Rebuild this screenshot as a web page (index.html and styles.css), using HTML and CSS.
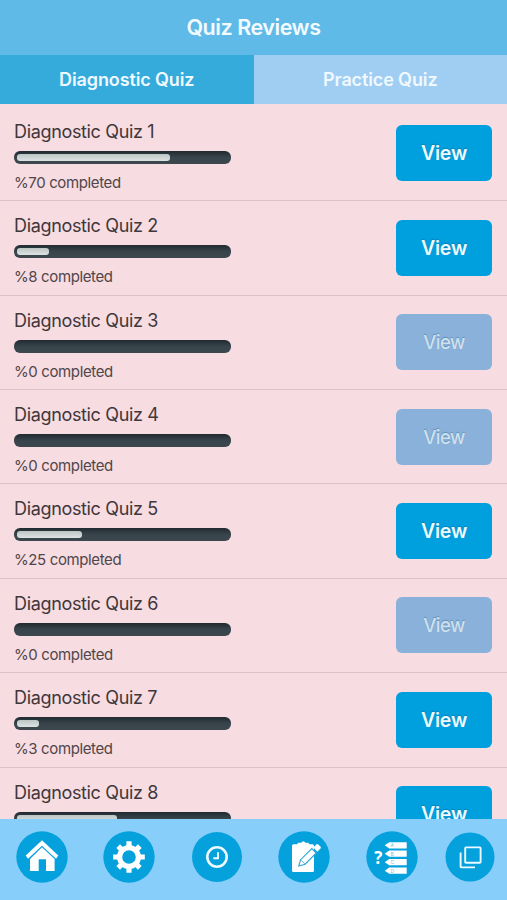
FILE: index.html
```html
<!DOCTYPE html>
<html lang="en">
<head>
    <meta charset="UTF-8">
    <meta name="viewport" content="width=device-width, initial-scale=1.0">
    <title>Quiz Reviews</title>
    <link rel="stylesheet" href="styles.css">
</head>
<body>
    <div class="app">
        <header class="header">Quiz Reviews</header>
        <nav class="tabs">
            <a class="tab active">Diagnostic Quiz</a>
            <a class="tab">Practice Quiz</a>
        </nav>

        <main class="quiz-list">
            <div class="quiz">
                <div class="info">
                    <div class="title">Diagnostic Quiz 1</div>
                    <div class="progress"><div class="fill" style="width: 72.5%"></div></div>
                    <div class="status">%70 completed</div>
                </div>
                <button class="view">View</button>
            </div>
            <div class="quiz">
                <div class="info">
                    <div class="title">Diagnostic Quiz 2</div>
                    <div class="progress"><div class="fill" style="width: 15.2%"></div></div>
                    <div class="status">%8 completed</div>
                </div>
                <button class="view">View</button>
            </div>
            <div class="quiz">
                <div class="info">
                    <div class="title">Diagnostic Quiz 3</div>
                    <div class="progress"></div>
                    <div class="status">%0 completed</div>
                </div>
                <button class="view" disabled>View</button>
            </div>
            <div class="quiz">
                <div class="info">
                    <div class="title">Diagnostic Quiz 4</div>
                    <div class="progress"></div>
                    <div class="status">%0 completed</div>
                </div>
                <button class="view" disabled>View</button>
            </div>
            <div class="quiz">
                <div class="info">
                    <div class="title">Diagnostic Quiz 5</div>
                    <div class="progress"><div class="fill" style="width: 31%"></div></div>
                    <div class="status">%25 completed</div>
                </div>
                <button class="view">View</button>
            </div>
            <div class="quiz">
                <div class="info">
                    <div class="title">Diagnostic Quiz 6</div>
                    <div class="progress"></div>
                    <div class="status">%0 completed</div>
                </div>
                <button class="view" disabled>View</button>
            </div>
            <div class="quiz">
                <div class="info">
                    <div class="title">Diagnostic Quiz 7</div>
                    <div class="progress"><div class="fill" style="width: 10.5%"></div></div>
                    <div class="status">%3 completed</div>
                </div>
                <button class="view">View</button>
            </div>
            <div class="quiz">
                <div class="info">
                    <div class="title">Diagnostic Quiz 8</div>
                    <div class="progress"><div class="fill" style="width: 47.5%"></div></div>
                </div>
                <button class="view">View</button>
            </div>
        </main>

        <footer class="toolbar">
            <svg class="icon" viewBox="0 0 52 52">
                <circle class="disc" cx="26" cy="26" r="25.7"/>
                <path class="solid" d="M26 9.2 42.3 24.6 40 27.8 26 14.8 12 27.8 9.7 24.6Z"/>
                <path class="solid" d="M26 16.3 38.6 28V40H30V28.2H22.7V40H14V28Z"/>
            </svg>
            <svg class="icon" viewBox="0 0 52 52">
                <circle class="disc" cx="26" cy="26" r="25.7"/>
                <circle class="ring" cx="26" cy="26" r="9.4"/>
                <g class="solid">
                    <path d="M23.4 15.5V10.2H28.6V15.5ZM23.4 36.5V41.8H28.6V36.5ZM15.5 23.4H10.2V28.6H15.5ZM36.5 23.4H41.8V28.6H36.5Z"/>
                    <path transform="rotate(45 26 26)" d="M23.4 15.5V10.7H28.6V15.5ZM23.4 36.5V41.3H28.6V36.5ZM15.5 23.4H10.7V28.6H15.5ZM36.5 23.4H41.3V28.6H36.5Z"/>
                </g>
            </svg>
            <svg class="icon" viewBox="0 0 52 52">
                <circle class="disc" cx="26" cy="26" r="25"/>
                <circle class="line thick" cx="26" cy="26" r="9.7"/>
                <path class="line" d="M27 21.3V27.3H22.3"/>
            </svg>
            <svg class="icon" viewBox="0 0 52 52">
                <circle class="disc" cx="26" cy="26" r="25.7"/>
                <path class="solid" d="M15.5 13.2H19L20.3 11.8H23.2Q25.3 8.5 27.4 11.8H30.2L31.5 13.2H34.5Q36 13.2 36 14.7V39.5Q36 41 34.5 41H15.5Q14 41 14 39.5V14.7Q14 13.2 15.5 13.2Z"/>
                <path class="pencil" d="M20.8 35 22.6 28.7 33.8 17.5 38.3 22 27.1 33.2Z"/>
                <path class="pencil-line" d="M22.6 28.7 27.1 33.2"/>
                <path class="solid" d="M35.4 16.6 38.5 13.3Q39.3 12.6 40.2 13.4L42.6 15.8Q43.3 16.7 42.5 17.5L39.3 20.7Z"/>
            </svg>
            <svg class="icon" viewBox="0 0 52 52">
                <circle class="disc" cx="26" cy="26" r="25.7"/>
                <text class="question" x="8.2" y="33.3">?</text>
                <path class="solid" d="M18.7 14.3 23.3 11.2H40.7V17.4H23.3ZM18.7 22.7 23.3 19.6H40.7V25.8H23.3ZM18.7 31.2 23.3 28.1H40.7V34.3H23.3ZM18.7 39.7 23.3 36.6H40.7V42.8H23.3Z"/>
                <text class="letter" x="24.5" y="16.3">A</text>
                <text class="letter" x="24.5" y="24.7">B</text>
                <text class="letter" x="24.5" y="33.2">C</text>
                <text class="letter" x="24.5" y="41.7">D</text>
            </svg>
            <svg class="icon icon-last" viewBox="0 0 52 52">
                <circle class="disc" cx="26" cy="26" r="24.5"/>
                <rect class="line" x="21.2" y="16.4" width="15.4" height="15.4" rx="0.8"/>
                <path class="line" d="M16.6 21.5V35.5Q16.6 36.4 17.5 36.4H31"/>
            </svg>
        </footer>
    </div>
</body>
</html>
```

FILE: styles.css
```css
* {
    box-sizing: border-box;
}
body {
    margin: 0;
    font-family: Inter, "Liberation Sans", sans-serif;
    background-color: #f7dce1;
}
.app {
    display: flex;
    flex-direction: column;
    height: 900px;
    overflow: hidden;
}
.header {
    flex: none;
    height: 55px;
    line-height: 54px;
    text-align: center;
    font-size: 21.5px;
    font-weight: 600;
    letter-spacing: -0.45px;
    color: #f2fbff;
    background-color: #60bae8;
}
.tabs {
    flex: none;
    display: flex;
    height: 49px;
}
.tab {
    flex: 1;
    line-height: 49px;
    text-align: center;
    font-size: 18px;
    font-weight: 600;
    letter-spacing: -0.12px;
    color: #f0f9ff;
    background-color: #9fcef2;
}
.tab.active {
    background-color: #35abdc;
}
.quiz-list {
    flex: 1;
    min-height: 0;
    overflow: hidden;
    padding-top: 2.9px;
}
.quiz {
    display: flex;
    justify-content: space-between;
    height: 94.4px;
    padding: 14px 15px 0 14px;
    border-bottom: 1px solid #dcc3c9;
}
.title {
    height: 22px;
    line-height: 22px;
    font-size: 18px;
    letter-spacing: -0.34px;
    color: #40373b;
}
.progress {
    width: 217px;
    height: 13px;
    margin-top: 8px;
    padding: 3px;
    border-radius: 6px;
    background: linear-gradient(#202a30, #38444b 50%, #3c474e);
}
.fill {
    height: 7px;
    border-radius: 3px;
    background: linear-gradient(#bdc4c4, #dce3e2);
}
.status {
    margin-top: 9px;
    line-height: 20px;
    font-size: 15px;
    letter-spacing: -0.38px;
    color: #50464a;
}
.view {
    width: 96px;
    height: 56px;
    margin-top: 4.5px;
    padding: 0;
    border: none;
    border-radius: 6px;
    font-family: inherit;
    font-size: 19.5px;
    font-weight: 600;
    letter-spacing: -0.2px;
    color: #eefaff;
    text-shadow: 0 -1px 1px rgba(0, 70, 110, 0.3);
    background-color: #009fdd;
}
.view:disabled {
    font-size: 18.5px;
    font-weight: 500;
    letter-spacing: -0.5px;
    color: #cfe0ee;
    background-color: #8ab1d9;
}
.toolbar {
    flex: none;
    display: flex;
    gap: 35.4px;
    height: 81px;
    padding: 12px 0 0 16px;
    background-color: #88cefa;
}
.icon {
    flex: none;
    width: 52px;
    height: 52px;
}
.icon-last {
    margin-left: -9px;
}
.disc {
    fill: #05a1dc;
}
.solid {
    fill: #fff;
}
.ring {
    fill: none;
    stroke: #fff;
    stroke-width: 5.2;
}
.line {
    fill: none;
    stroke: #eefaff;
    stroke-width: 1.9;
}
.thick {
    stroke-width: 2.6;
}
.pencil {
    fill: #fff;
    stroke: #2aa5d8;
    stroke-width: 1.1;
}
.pencil-line {
    fill: none;
    stroke: #2aa5d8;
    stroke-width: 0.7;
}
.question {
    font-size: 17px;
    font-weight: 700;
    font-family: "Open Sans", sans-serif;
    fill: #fff;
}
.letter {
    font-size: 5px;
    fill: #6cc5e8;
}
```
